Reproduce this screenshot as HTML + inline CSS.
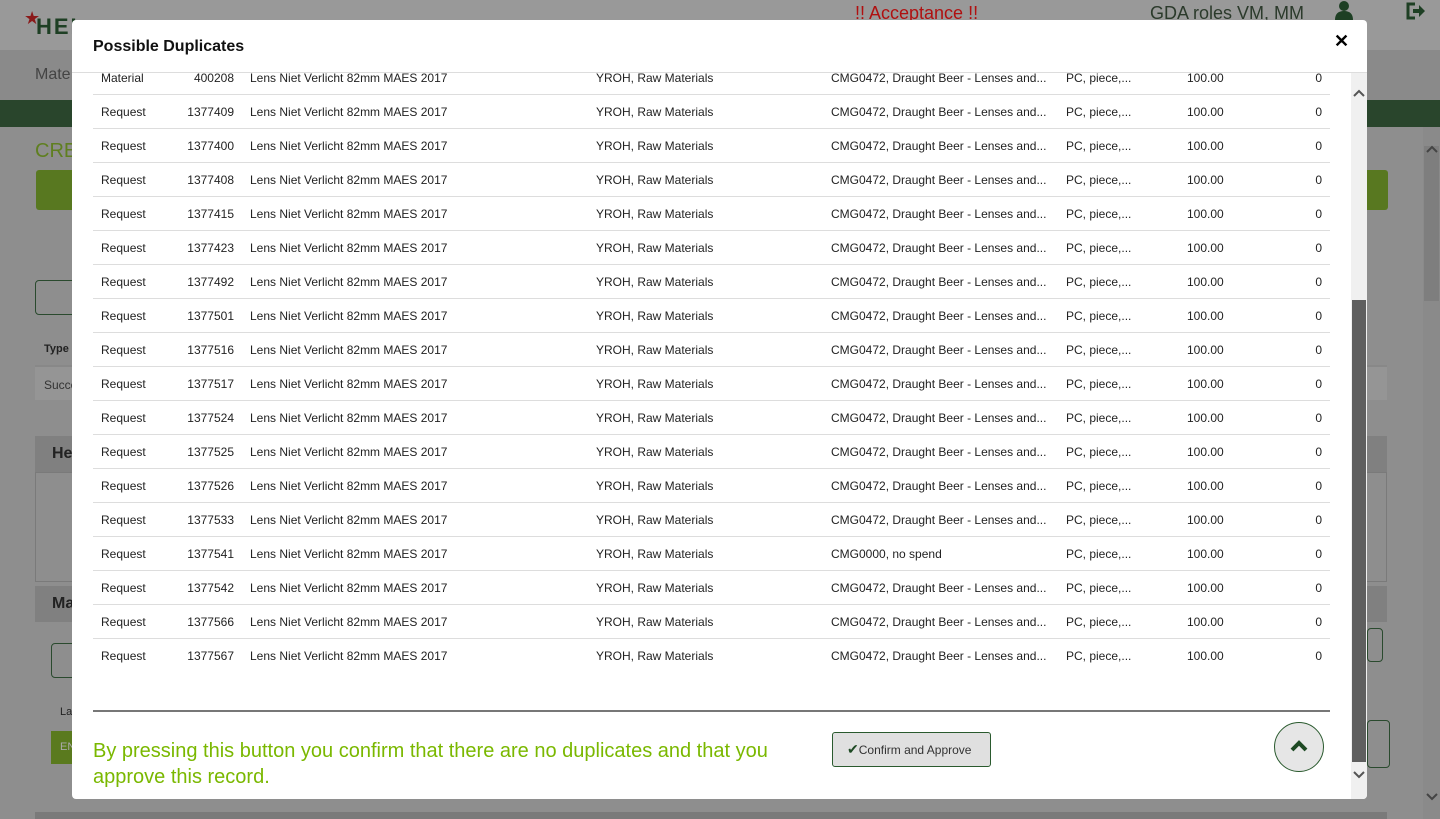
<!DOCTYPE html>
<html><head><style>
*{margin:0;padding:0;box-sizing:border-box}
body{width:1440px;height:819px;overflow:hidden;background:#8e8e8e;font-family:"Liberation Sans",Arial,sans-serif;position:relative}
.a{position:absolute}
.r{position:absolute;left:93px;width:1237px;height:34px;font-size:12px;color:#222}
.r span{position:absolute;top:10px;white-space:nowrap}
.sep{position:absolute;left:93px;width:1237px;height:1px;background:#ddd}
</style></head><body>
<div class="a" style="left:0;top:0;width:1440px;height:50px;background:#999"></div>
<div class="a" style="left:24px;top:8px;color:#8a1a1a;font-size:18px">★</div>
<div class="a" style="left:36px;top:14px;color:#1e3f24;font-size:22px;font-weight:bold;letter-spacing:2px">HEI</div>
<div class="a" style="left:855px;top:3px;color:#b01010;font-size:18px">!! Acceptance !!</div>
<div class="a" style="left:1150px;top:3px;color:#2b3a2b;font-size:18px">GDA roles VM, MM</div>
<svg class="a" style="left:1333px;top:0" width="22" height="22" viewBox="0 0 22 22"><circle cx="11" cy="6" r="5" fill="#1e3f24"/><path d="M2 20 Q2 11 11 11 Q20 11 20 20Z" fill="#1e3f24"/></svg>
<svg class="a" style="left:1405px;top:2px" width="22" height="18" viewBox="0 0 22 18"><path d="M10 2H3V16H10" stroke="#1e3f24" stroke-width="3" fill="none"/><path d="M8 7H14V3L20 9L14 15V11H8Z" fill="#1e3f24"/></svg>
<div class="a" style="left:0;top:50px;width:1440px;height:50px;background:#8a8a8a"></div>
<div class="a" style="left:35px;top:66px;color:#444;font-size:16px">Mate</div>
<div class="a" style="left:0;top:100px;width:1440px;height:27px;background:#29452c"></div>
<div class="a" style="left:35px;top:140px;color:#5f7f20;font-size:20px">CRE</div>
<div class="a" style="left:36px;top:170px;width:1352px;height:40px;background:#587820;border-radius:3px"></div>
<div class="a" style="left:35px;top:280px;width:50px;height:35px;border:1px solid #2a4a2e;border-radius:4px"></div>
<div class="a" style="left:44px;top:343px;font-size:11px;font-weight:bold;color:#222">Type</div>
<div class="a" style="left:35px;top:365px;width:1352px;height:35px;background:#959595;border-top:2px solid #888"></div>
<div class="a" style="left:44px;top:378px;font-size:12px;color:#333">Succe</div>
<div class="a" style="left:35px;top:436px;width:1352px;height:36px;background:#808080"></div>
<div class="a" style="left:52px;top:445px;font-size:16px;font-weight:bold;color:#222">He</div>
<div class="a" style="left:35px;top:472px;width:1352px;height:110px;border:1px solid #7a7a7a"></div>
<div class="a" style="left:35px;top:586px;width:1352px;height:36px;background:#808080"></div>
<div class="a" style="left:52px;top:595px;font-size:16px;font-weight:bold;color:#222">Ma</div>
<div class="a" style="left:51px;top:643px;width:40px;height:35px;border:1px solid #2a4a2e;border-radius:4px"></div>
<div class="a" style="left:60px;top:706px;font-size:11px;color:#222">La</div>
<div class="a" style="left:51px;top:731px;width:40px;height:33px;background:#5a7a1e"></div>
<div class="a" style="left:60px;top:741px;font-size:11px;color:#aaa">EN</div>
<div class="a" style="left:1367px;top:720px;width:23px;height:48px;border:1px solid #2a4a2e;border-radius:4px"></div>
<div class="a" style="left:1367px;top:628px;width:16px;height:34px;border:1px solid #2a4a2e;border-radius:4px"></div>
<div class="a" style="left:35px;top:812px;width:1352px;height:7px;background:#7a7a7a"></div>
<div class="a" style="left:1423px;top:127px;width:17px;height:692px;background:#8a8a8a"></div>
<div class="a" style="left:1424px;top:146px;width:15px;height:155px;background:#7e7e7e"></div>
<svg class="a" style="left:1425px;top:144px" width="14" height="10"><path d="M2 8L7 3L12 8" stroke="#444" stroke-width="2" fill="none"/></svg>
<svg class="a" style="left:1425px;top:792px" width="14" height="10"><path d="M2 2L7 7L12 2" stroke="#444" stroke-width="2" fill="none"/></svg>

<div class="a" style="left:72px;top:20px;width:1295px;height:779px;background:#fff;border-radius:4px;overflow:hidden">
 <div class="a" style="left:21px;top:18px;font-size:16px;font-weight:bold;color:#111">Possible Duplicates</div>
 <div class="a" style="left:1262px;top:11px;font-size:18px;font-weight:bold;color:#000">✕</div>
 <div class="a" style="left:0;top:52px;width:1295px;height:1px;background:#ddd"></div>
 <div class="a" style="left:1279px;top:53px;width:16px;height:726px;background:#f0f0f0"></div>
 <div class="a" style="left:1280px;top:280px;width:14px;height:462px;background:#5f5f5f"></div>
 <svg class="a" style="left:1280px;top:68px" width="14" height="10"><path d="M2 8L7 3L12 8" stroke="#555" stroke-width="2" fill="none"/></svg>
 <svg class="a" style="left:1280px;top:750px" width="14" height="10"><path d="M2 2L7 7L12 2" stroke="#555" stroke-width="2" fill="none"/></svg>
</div>
<div class="a" style="left:72px;top:73px;width:1279px;height:627px;overflow:hidden">
<div class="a" style="left:-72px;top:-73px;width:1440px;height:800px" id="t"></div>
</div>
<div class="a" style="left:93px;top:710px;width:1237px;height:2px;background:#777"></div>
<div class="a" style="left:93px;top:738px;font-size:20px;color:#7ab800;line-height:26px;width:720px">By pressing this button you confirm that there are no duplicates and that you approve this record.</div>
<div class="a" style="left:832px;top:732px;width:159px;height:35px;background:#e0e0e0;border:1px solid #2a5a2e;border-radius:3px;font-size:12px;color:#333;padding:8px 0 0 14px"><span style="color:#1e4a24;font-size:14px">✔</span>Confirm and Approve</div>
<div class="a" style="left:1274px;top:722px;width:50px;height:50px;background:#e6e6e6;border:1px solid #2a5a2e;border-radius:50%"></div>
<svg class="a" style="left:1289px;top:739px" width="20" height="14"><path d="M3 11L10 4L17 11" stroke="#1e4a24" stroke-width="4" fill="none"/></svg>

<script>
var nums=["400208","1377409","1377400","1377408","1377415","1377423","1377492","1377501","1377516","1377517","1377524","1377525","1377526","1377533","1377541","1377542","1377566","1377567"];
var h="";
for(var i=0;i<nums.length;i++){
 var y=61+34*i;
 var cmg=nums[i]=="1377541"?"CMG0000, no spend":"CMG0472, Draught Beer - Lenses and...";
 h+='<div class="r" style="top:'+y+'px"><span style="left:8px">'+(i==0?"Material":"Request")+'</span><span style="right:1096px">'+nums[i]+'</span><span style="left:157px">Lens Niet Verlicht 82mm MAES 2017</span><span style="left:503px">YROH, Raw Materials</span><span style="left:738px">'+cmg+'</span><span style="left:973px">PC, piece,...</span><span style="left:1094px">100.00</span><span style="right:8px">0</span></div>';
 if(i<nums.length-1)h+='<div class="sep" style="top:'+(94+34*i)+'px"></div>';
}
document.getElementById("t").innerHTML=h;
</script>
</body></html>
